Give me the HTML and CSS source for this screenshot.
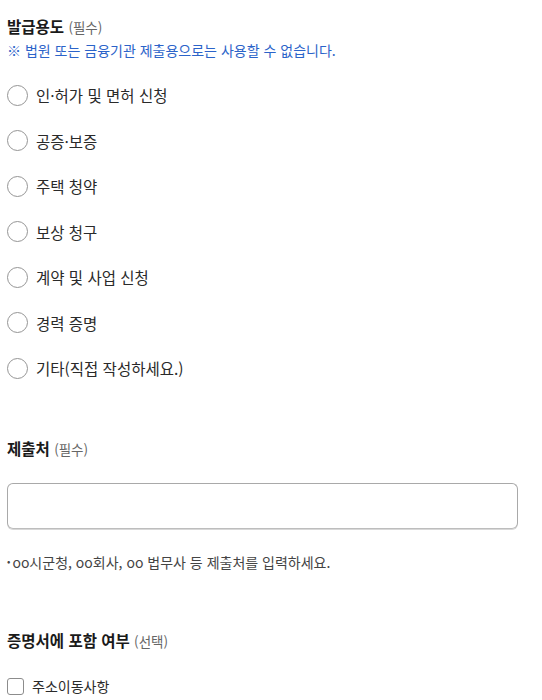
FILE: index.html
```html
<!DOCTYPE html>
<html lang="ko">
<head>
<meta charset="utf-8">
<title>발급용도</title>
<link rel="stylesheet" href="styles.css">
</head>
<body>
<div class="page">
  <section class="block block-first">
    <h2 class="heading">발급용도 <span class="sub">(필수)</span></h2>
    <p class="notice">※ 법원 또는 금융기관 제출용으로는 사용할 수 없습니다.</p>
    <div class="options">
      <label class="option"><span class="radio"></span><span class="opt-text">인·허가 및 면허 신청</span></label>
      <label class="option"><span class="radio"></span><span class="opt-text">공증·보증</span></label>
      <label class="option"><span class="radio"></span><span class="opt-text">주택 청약</span></label>
      <label class="option"><span class="radio"></span><span class="opt-text">보상 청구</span></label>
      <label class="option"><span class="radio"></span><span class="opt-text">계약 및 사업 신청</span></label>
      <label class="option"><span class="radio"></span><span class="opt-text">경력 증명</span></label>
      <label class="option"><span class="radio"></span><span class="opt-text">기타(직접 작성하세요.)</span></label>
    </div>
  </section>

  <section class="block">
    <h2 class="heading">제출처 <span class="sub">(필수)</span></h2>
    <div class="input-box"></div>
    <p class="helper"><span class="dot">•</span>oo시군청, oo회사, oo 법무사 등 제출처를 입력하세요.</p>
  </section>

  <section class="block">
    <h2 class="heading">증명서에 포함 여부 <span class="sub">(선택)</span></h2>
    <label class="check-row"><span class="checkbox"></span><span class="opt-text small">주소이동사항</span></label>
  </section>
</div>
</body>
</html>
```

FILE: styles.css
```css
* { box-sizing: border-box; }
html, body { margin: 0; padding: 0; background: #fff; }
body {
  font-family: "Noto Sans CJK KR", "Noto Sans", sans-serif;
  color: #222;
}
.page {
  padding: 16px 24px 0 7px;
}
.block { margin-top: 59px; }
.block-first { margin-top: 0; }

.heading {
  margin: 0;
  font-size: 15.5px;
  line-height: 20px;
  font-weight: 700;
  color: #1a1a1a;
}
.sub {
  font-size: 13.5px;
  font-weight: 400;
  color: #666;
}
.notice {
  margin: 3px 0 0;
  font-size: 14px;
  line-height: 20px;
  color: #2b63c9;
}
.options {
  margin-top: 24px;
  display: flex;
  flex-direction: column;
  gap: 23.5px;
}
.option, .check-row {
  display: flex;
  align-items: center;
  height: 22px;
  gap: 8px;
}
.radio {
  width: 21px;
  height: 21px;
  border: 1px solid #959595;
  border-radius: 50%;
  flex: none;
}
.opt-text {
  font-size: 15.5px;
  line-height: 22px;
  color: #2a2a2a;
}
.opt-text.small { font-size: 14px; }

.input-box {
  margin-top: 24px;
  width: 511px;
  height: 46px;
  border: 1px solid #a9a9a9;
  border-bottom-color: #bdbdbd;
  border-radius: 6px;
  box-shadow: 0 1px 0 #d8d8d8;
}
.helper {
  margin: 23px 0 0;
  font-size: 14px;
  line-height: 18px;
  color: #444;
}
.dot {
  font-size: 10px;
  vertical-align: 3px;
  margin-right: 2px;
}
.check-row {
  margin-top: 25px;
  height: 20px;
}
.checkbox {
  width: 17px;
  height: 17px;
  border: 1px solid #8c8c8c;
  border-radius: 3px;
  flex: none;
}
```
